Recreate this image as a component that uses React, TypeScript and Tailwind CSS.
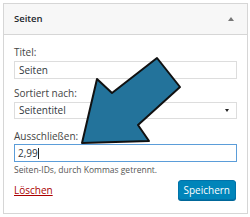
import React from 'react';

const Arrow: React.FC = () => (
  <svg className="absolute left-0 top-0 pointer-events-none" width="250" height="217" viewBox="0 0 250 217">
    <polygon
      points="157,58 180,87 138,125 149,141 82,143 97,79 112,93"
      fill="#23739b"
      stroke="#111"
      strokeWidth="2"
      strokeLinejoin="round"
    />
  </svg>
);

const App: React.FC = () => {
  return (
    <div className="relative w-[250px] h-[217px] bg-white overflow-hidden" style={{ fontFamily: '"Open Sans", sans-serif' }}>
      <div className="ml-[3px] mt-[3px] w-[245px] h-[211px] border border-[#d6d6d6] bg-white">
        {/* Header */}
        <div className="h-[31px] bg-[#f7f7f7] border-b border-[#d6d6d6] flex items-center justify-between px-[10px]">
          <span className="text-[9.5px] font-semibold text-[#23282d]">Seiten</span>
          <span className="w-0 h-0 border-l-[3px] border-r-[3px] border-b-[4px] border-l-transparent border-r-transparent border-b-[#777] mr-[3px]" />
        </div>

        {/* Body */}
        <div className="px-[10px] pt-[11px] text-[#444]">
          <div className="text-[10px] leading-[13px]">Titel:</div>
          <div className="mt-[2px] h-[18px] border border-[#ddd] px-[4px] flex items-center text-[10px] text-[#32373c]">Seiten</div>

          <div className="mt-[8px] text-[10px] leading-[13px]">Sortiert nach:</div>
          <div className="mt-[2px] h-[17px] border border-[#ddd] px-[4px] flex items-center justify-between text-[10px] text-[#32373c]">
            <span>Seitentitel</span>
            <span className="w-0 h-0 border-l-[2px] border-r-[2px] border-t-[3px] border-l-transparent border-r-transparent border-t-[#222] mr-[3px]" />
          </div>

          <div className="mt-[11px] text-[10px] leading-[13px]">Ausschließen:</div>
          <div className="mt-[1px] h-[18px] border border-[#5b9dd9] px-[3px] flex items-center text-[10px] text-[#32373c]">
            <span>2,99</span>
            <span className="w-px h-[11px] bg-[#222]" />
          </div>
          <div className="mt-[2px] text-[8.5px] leading-[11px] text-[#555]">Seiten-IDs, durch Kommas getrennt.</div>

          <div className="mt-[5px] flex items-center justify-between">
            <span className="text-[10px] text-[#a00] underline">Löschen</span>
            <button className="h-[20px] px-[5px] mr-[1px] rounded-[3px] bg-[#0085ba] border border-[#0073aa] text-white text-[10px] shadow-[0_1px_0_#006799]">
              Speichern
            </button>
          </div>
        </div>
      </div>
      <Arrow />
    </div>
  );
};

export default App;
